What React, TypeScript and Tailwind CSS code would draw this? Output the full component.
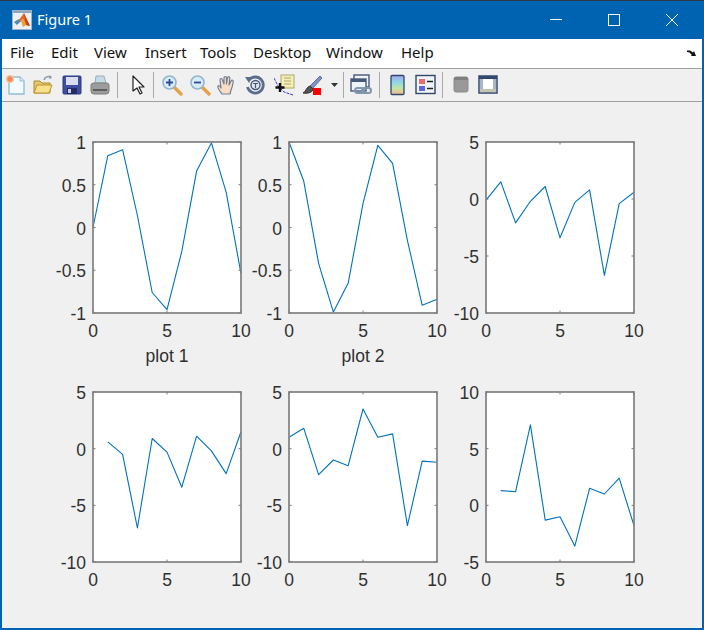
import React from "react";

type AxesProps = {
  ymin: number;
  ymax: number;
  yticks: string[];
  data: [number, number][];
  h: number;
  xlabel?: string;
};

const W = 148;
const OX = 53;
const OY = 12;

function Axes({ ymin, ymax, yticks, data, h, xlabel }: AxesProps) {
  const sx = (x: number) => OX + (x / 10) * W;
  const sy = (y: number) => OY + h - ((y - ymin) / (ymax - ymin)) * h;
  const pts = data.map(([x, y]) => `${sx(x).toFixed(1)},${sy(y).toFixed(1)}`).join(" ");
  const tickVals = yticks.map(Number);
  return (
    <svg width="196" height="250" className="block overflow-visible" style={{ fontFamily: '"Liberation Sans", Arial, sans-serif' }}>
      <rect x={OX} y={OY} width={W} height={h} fill="#ffffff" />
      {tickVals.map((t) => (
        <g key={t} stroke="#7a7a7a" strokeWidth="1">
          <line x1={OX} x2={OX + 2.5} y1={sy(t)} y2={sy(t)} />
          <line x1={OX + W - 2.5} x2={OX + W} y1={sy(t)} y2={sy(t)} />
        </g>
      ))}
      {[0, 5, 10].map((t) => (
        <g key={t} stroke="#7a7a7a" strokeWidth="1">
          <line x1={sx(t)} x2={sx(t)} y1={OY} y2={OY + 2.5} />
          <line x1={sx(t)} x2={sx(t)} y1={OY + h - 2.5} y2={OY + h} />
        </g>
      ))}
      <polyline points={pts} fill="none" stroke="#0072bd" strokeWidth="1.1" strokeLinejoin="round" />
      <rect x={OX} y={OY} width={W} height={h} fill="none" stroke="#808080" strokeWidth="1.7" />
      {yticks.map((t) => (
        <text key={t} x={OX - 7} y={sy(Number(t)) + 7} textAnchor="end" fontSize="17.5" fill="#303030">
          {t}
        </text>
      ))}
      {[0, 5, 10].map((t) => (
        <text key={t} x={sx(t)} y={OY + h + 24} textAnchor="middle" fontSize="17.5" fill="#303030">
          {t}
        </text>
      ))}
      {xlabel && (
        <text x={OX + W / 2} y={OY + h + 49} textAnchor="middle" fontSize="17.5" fill="#303030">
          {xlabel}
        </text>
      )}
    </svg>
  );
}

const seq = (vals: number[], start = 0): [number, number][] => vals.map((v, i) => [i + start, v]);

const plots: AxesProps[] = [
  { ymin: -1, ymax: 1, h: 171, xlabel: "plot 1", yticks: ["1", "0.5", "0", "-0.5", "-1"], data: seq([0, 0.84, 0.91, 0.14, -0.76, -0.96, -0.28, 0.66, 0.99, 0.41, -0.54]) },
  { ymin: -1, ymax: 1, h: 171, xlabel: "plot 2", yticks: ["1", "0.5", "0", "-0.5", "-1"], data: seq([1, 0.54, -0.42, -0.99, -0.65, 0.28, 0.96, 0.75, -0.15, -0.91, -0.84]) },
  { ymin: -10, ymax: 5, h: 171, yticks: ["5", "0", "-5", "-10"], data: seq([-0.1, 1.5, -2.1, -0.2, 1.1, -3.4, -0.3, 0.8, -6.7, -0.4, 0.6]) },
  { ymin: -10, ymax: 5, h: 170, yticks: ["5", "0", "-5", "-10"], data: seq([0.6, -0.5, -7, 0.9, -0.3, -3.4, 1.1, -0.2, -2.2, 1.5], 1) },
  { ymin: -10, ymax: 5, h: 170, yticks: ["5", "0", "-5", "-10"], data: seq([1, 1.8, -2.3, -1, -1.5, 3.5, 1, 1.3, -6.8, -1.1, -1.2]) },
  { ymin: -5, ymax: 10, h: 170, yticks: ["10", "5", "0", "-5"], data: seq([1.3, 1.2, 7.1, -1.3, -1, -3.6, 1.5, 1, 2.4, -1.8], 1) },
];

const menu = [
  { label: "File", cls: "w-[41px]" },
  { label: "Edit", cls: "w-[43px]" },
  { label: "View", cls: "w-[51px]" },
  { label: "Insert", cls: "w-[55px]" },
  { label: "Tools", cls: "w-[53px]" },
  { label: "Desktop", cls: "w-[73px]" },
  { label: "Window", cls: "w-[75px]" },
  { label: "Help", cls: "w-[40px]" },
];

function Icon({ w = 22, children }: { w?: number; children: React.ReactNode }) {
  return (
    <svg width={w} height="22" viewBox={`0 0 ${w} 22`} className="block shrink-0">
      {children}
    </svg>
  );
}

const Sep = () => <div className="h-[26px] w-[1px] shrink-0 bg-[#a9a9a9]" />;

function MatlabLogo() {
  return (
    <svg width="20" height="20" viewBox="0 0 20 20" className="block shrink-0">
      <rect x="0.5" y="0.5" width="19" height="19" fill="#eef1f4" stroke="#9fb3c8" />
      <rect x="1" y="1" width="18" height="2" fill="#8ea6bf" />
      <polygon points="2,12 7,9 9,11 5,15" fill="#4f87b8" />
      <polygon points="7,10 12,3 18,16 14,15 11,9 8,12" fill="#e6661f" />
      <polygon points="12,3 15,10 18,16 14,15" fill="#c8401a" />
      <polygon points="9,11 11,9 14,15 11,17" fill="#f0a030" />
    </svg>
  );
}

function Toolbar() {
  return (
    <div className="flex h-[32px] shrink-0 items-center bg-[#f0f0f0] pl-[3px]">
      <Icon>
        <path d="M4 3h11l4 4v13H4z" fill="#f4fbff" stroke="#8fc0dc" strokeWidth="1.4" />
        <path d="M15 3v4h4" fill="#d8ecf6" stroke="#8fc0dc" />
        <circle cx="5" cy="5" r="3.4" fill="#f08a5a" stroke="#f6c79c" strokeWidth="1.4" />
      </Icon>
      <div className="w-[5px] shrink-0" />
      <Icon>
        <path d="M12 6c1-3 4-4 7-3" fill="none" stroke="#8a9aa8" strokeWidth="1.6" />
        <path d="M18 1l2 3-3 1z" fill="#8a9aa8" />
        <path d="M2 7h6l2 2h8v10H2z" fill="#e8c766" stroke="#a88a30" />
        <path d="M2 19l3-8h15l-3 8z" fill="#f6e08c" stroke="#b8962f" />
      </Icon>
      <div className="w-[7px] shrink-0" />
      <Icon>
        <rect x="2" y="2" width="18" height="18" rx="1" fill="#3f4f9f" stroke="#2d3a80" />
        <rect x="5" y="3" width="12" height="8" fill="#d8def0" />
        <rect x="6" y="14" width="10" height="6" fill="#232c60" />
        <rect x="7" y="15" width="3" height="4" fill="#c9d0e6" />
      </Icon>
      <div className="w-[6px] shrink-0" />
      <Icon>
        <path d="M7 2h8l2 7H6z" fill="#c5dbe8" stroke="#9ab0bd" />
        <path d="M2 11q0-2 3-2h12q3 0 3 2v6q0 3-3 3H5q-3 0-3-3z" fill="#9c9c9c" stroke="#7d7d7d" />
        <rect x="4" y="15" width="14" height="2" fill="#5f5f5f" />
      </Icon>
      <div className="w-[6px] shrink-0" />
      <Sep />
      <div className="w-[11px] shrink-0" />
      <Icon w={18}>
        <path d="M4 2v15l4-3 3 6 2-1-3-6h5z" fill="#ffffff" stroke="#222222" strokeWidth="1.2" strokeLinejoin="round" />
      </Icon>
      <div className="w-[6px] shrink-0" />
      <Sep />
      <div className="w-[7px] shrink-0" />
      <Icon>
        <line x1="13" y1="13" x2="20" y2="20" stroke="#e3a24a" strokeWidth="3.4" strokeLinecap="round" />
        <circle cx="8.5" cy="8.5" r="6.5" fill="#d6ecf7" stroke="#93b6cc" strokeWidth="1.6" />
        <path d="M5 8.5h7M8.5 5v7" stroke="#33489a" strokeWidth="1.8" />
      </Icon>
      <div className="w-[6px] shrink-0" />
      <Icon>
        <line x1="13" y1="13" x2="20" y2="20" stroke="#e3a24a" strokeWidth="3.4" strokeLinecap="round" />
        <circle cx="8.5" cy="8.5" r="6.5" fill="#d6ecf7" stroke="#93b6cc" strokeWidth="1.6" />
        <path d="M5 8.5h7" stroke="#33489a" strokeWidth="1.8" />
      </Icon>
      <div className="w-[5px] shrink-0" />
      <Icon>
        <path
          d="M6 20c-2-3-5-6-4-8 1-1 2 0 3 2l-1-8c0-2 2-2 2.500 0L8 10V4c0-2 2.500-2 2.500 0v6l1-6c.5-2 2.500-1.500 2.300.5L13 11l2-4c1-1.500 2.500-1 2.200 1-.5 3-1.200 6-2.200 8l-1 4z"
          fill="#fbdcc2"
          stroke="#6d7f96"
          strokeWidth="1.2"
          strokeLinejoin="round"
        />
      </Icon>
      <div className="w-[6px] shrink-0" />
      <Icon>
        <path d="M5 6a8 8 0 1 1-1.500 7" fill="none" stroke="#5a6d8c" strokeWidth="2.800" />
        <path d="M1 3l7 0-3 6z" fill="#5a6d8c" />
        <circle cx="11.500" cy="11" r="4.500" fill="#dfe6ee" stroke="#47597a" strokeWidth="1.400" />
        <path d="M9 9.500h5M11.500 9.500v4.500" stroke="#47597a" strokeWidth="1.200" />
      </Icon>
      <div className="w-[8px] shrink-0" />
      <Icon>
        <path d="M0 4l4 8 6 6 9 3" fill="none" stroke="#3838e0" strokeWidth="1" strokeDasharray="3 1" />
        <rect x="7" y="1" width="13" height="13" fill="#f7eeb4" stroke="#a9a675" />
        <path d="M10 4h7M10 7h7M10 10h7" stroke="#a9a675" />
        <path d="M6 9v9M1.500 13.500h9" stroke="#111111" strokeWidth="2.400" />
      </Icon>
      <div className="w-[4px] shrink-0" />
      <Icon w={24}>
        <path d="M20 2l2 2-9 10-3-2z" fill="#7f93c8" stroke="#5d6fa6" />
        <path d="M10 12l3 3c0 3-5 5-10 4 3-1 3-6 7-7z" fill="#555555" stroke="#333333" />
        <rect x="13" y="14" width="8" height="7" fill="#ff0000" />
      </Icon>
      <div className="w-[7px] shrink-0" />
      <svg width="8" height="4" viewBox="0 0 8 4" className="block shrink-0">
        <path d="M0 0h7L3.500 4z" fill="#333333" />
      </svg>
      <div className="w-[4px] shrink-0" />
      <Sep />
      <div className="w-[6px] shrink-0" />
      <Icon>
        <rect x="4" y="1" width="15" height="12" fill="#eef3f8" stroke="#47597a" strokeWidth="1.400" />
        <rect x="1" y="5" width="15" height="12" fill="#eef3f8" stroke="#47597a" strokeWidth="1.400" />
        <rect x="1" y="5" width="15" height="3" fill="#47597a" />
        <rect x="5" y="14" width="9" height="5" rx="2.500" fill="none" stroke="#7f97ad" strokeWidth="2" />
        <rect x="12" y="14" width="9" height="5" rx="2.500" fill="none" stroke="#7f97ad" strokeWidth="2" />
      </Icon>
      <div className="w-[7px] shrink-0" />
      <Sep />
      <div className="w-[10px] shrink-0" />
      <svg width="16" height="22" viewBox="0 0 16 22" className="block shrink-0">
        <defs>
          <linearGradient id="cb" x1="0" y1="0" x2="0" y2="1">
            <stop offset="0" stopColor="#a9a6e8" />
            <stop offset="0.35" stopColor="#8fd6e8" />
            <stop offset="0.65" stopColor="#bfe6a8" />
            <stop offset="1" stopColor="#f5b98a" />
          </linearGradient>
        </defs>
        <rect x="1" y="1.500" width="13" height="19" rx="1" fill="url(#cb)" stroke="#30476e" strokeWidth="1.300" />
      </svg>
      <div className="w-[9px] shrink-0" />
      <Icon w={21}>
        <rect x="1" y="1.500" width="19" height="18" fill="#f2f4f8" stroke="#30476e" strokeWidth="1.400" />
        <rect x="4" y="5" width="6" height="5" fill="#ef6a6a" />
        <rect x="4" y="12" width="6" height="5" fill="#5b66e0" />
        <path d="M12 7.500h6M12 14.500h6" stroke="#222222" strokeWidth="1.600" />
      </Icon>
      <div className="w-[6px] shrink-0" />
      <Sep />
      <div className="w-[10px] shrink-0" />
      <Icon w={16}>
        <rect x="1" y="3" width="14" height="15" rx="2" fill="#999999" stroke="#8a8a8a" />
        <rect x="1" y="3" width="14" height="3" rx="1.500" fill="#808080" />
      </Icon>
      <div className="w-[9px] shrink-0" />
      <Icon w={20}>
        <rect x="1" y="2" width="18" height="17" fill="#ffffff" stroke="#30476e" strokeWidth="1.500" />
        <rect x="1" y="2" width="18" height="3" fill="#30476e" />
        <rect x="2" y="5" width="3" height="13" fill="#a9b6c9" />
        <rect x="15" y="5" width="3" height="13" fill="#a9b6c9" />
        <rect x="2" y="15" width="16" height="3" fill="#c4c4b4" />
      </Icon>
    </div>
  );
}

export default function App() {
  return (
    <div
      className="flex h-[630px] w-[704px] flex-col overflow-hidden border-t border-[#2b3a48] bg-[#0063b1] px-[2px] pb-[2px]"
      style={{ fontFamily: '"Noto Sans", "Open Sans", sans-serif' }}
    >
      <div className="flex h-[38px] shrink-0 items-center pl-[10px] text-white">
        <MatlabLogo />
        <span className="ml-[5px] text-[14.5px]">Figure 1</span>
        <div className="ml-auto flex items-center gap-[46px] pr-[24px]">
          <svg width="12" height="12" viewBox="0 0 12 12" className="block">
            <path d="M0 5.500h12" stroke="#ffffff" strokeWidth="1" />
          </svg>
          <svg width="12" height="12" viewBox="0 0 12 12" className="block">
            <rect x="0.500" y="0.500" width="11" height="11" fill="none" stroke="#ffffff" />
          </svg>
          <svg width="12" height="12" viewBox="0 0 12 12" className="block">
            <path d="M0 0l12 12M12 0L0 12" stroke="#ffffff" strokeWidth="1" />
          </svg>
        </div>
      </div>
      <div className="flex h-[30px] shrink-0 items-center border-b border-[#a0a0a0] bg-white pb-[2px] pl-[8px] pr-[5px] text-[15px] text-[#111111]">
        {menu.map((m) => (
          <span key={m.label} className={`${m.cls} shrink-0`}>
            {m.label}
          </span>
        ))}
        <svg width="10" height="8" viewBox="0 0 10 8" className="ml-auto block">
          <path d="M0 1.500h3l3 2 1-1.500 2 5H3.500l1.500-1-2.500-2.500L0 3z" fill="#111111" />
        </svg>
      </div>
      <Toolbar />
      <div className="min-h-0 flex-1 overflow-hidden border-t border-[#a0a0a0] bg-[#f0f0f0] pl-[38px] pt-[28px]">
        <div className="grid grid-cols-[196px_197px_196px] grid-rows-[250px_250px]">
          {plots.map((p, i) => (
            <Axes key={i} {...p} />
          ))}
        </div>
      </div>
    </div>
  );
}
